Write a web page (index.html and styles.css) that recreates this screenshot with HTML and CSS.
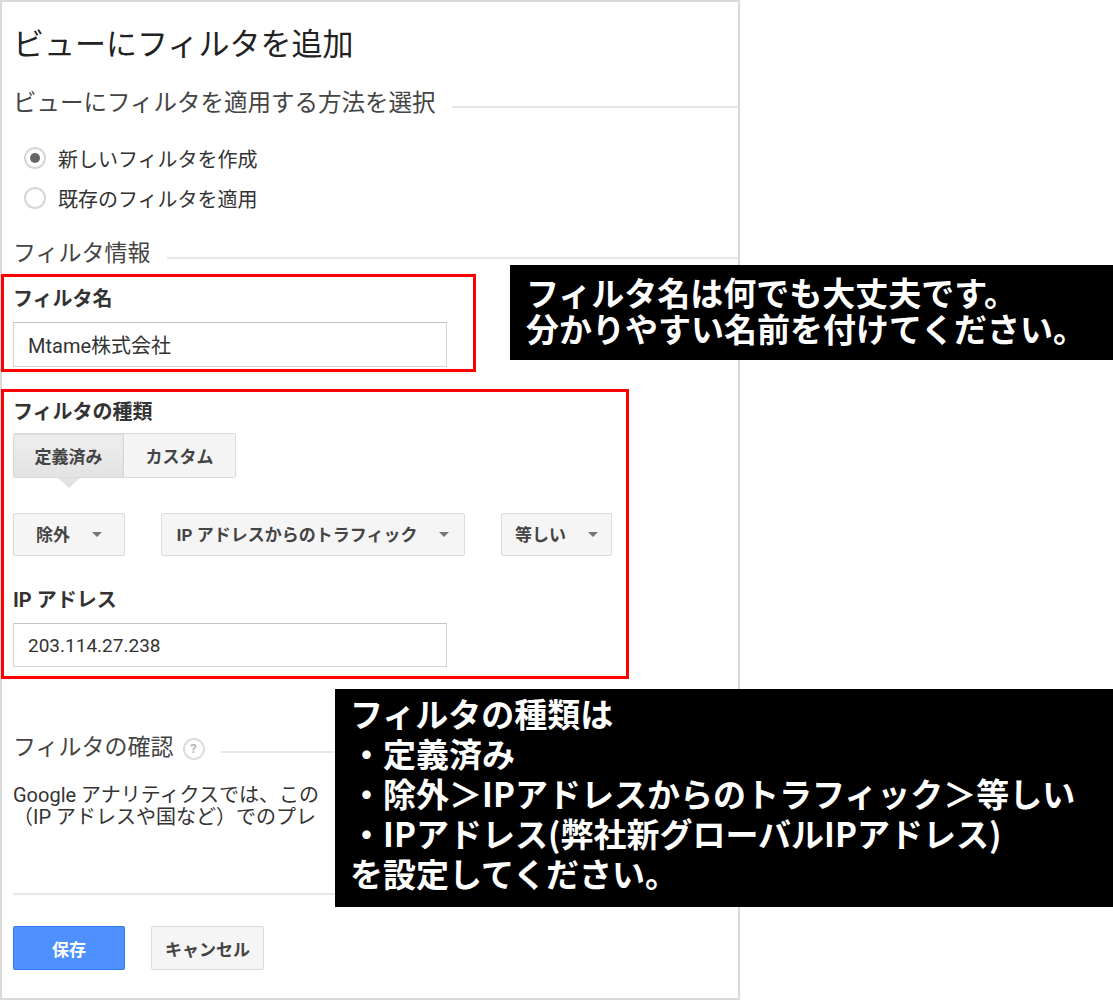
FILE: index.html
```html
<!DOCTYPE html>
<html lang="ja">
<head>
<meta charset="utf-8">
<title>ビューにフィルタを追加</title>
<link rel="stylesheet" href="styles.css">
</head>
<body>
<div class="page">
  <div class="panel">
    <h1 class="title">ビューにフィルタを追加</h1>

    <div class="sec-head sec-method"><span>ビューにフィルタを適用する方法を選択</span><i class="rule"></i></div>
    <div class="radios">
      <div class="radio"><span class="dot dot-on"></span>新しいフィルタを作成</div>
      <div class="radio"><span class="dot"></span>既存のフィルタを適用</div>
    </div>

    <div class="sec-head sec-info"><span>フィルタ情報</span><i class="rule"></i></div>
    <div class="field-label label-name">フィルタ名</div>
    <div class="input input-name">Mtame株式会社</div>

    <div class="field-label label-type">フィルタの種類</div>
    <div class="seg">
      <span class="seg-btn seg-sel">定義済み</span>
      <span class="seg-btn">カスタム</span>
    </div>

    <div class="drops">
      <div class="drop"><span>除外</span><i class="caret"></i></div>
      <div class="drop"><span>IP アドレスからのトラフィック</span><i class="caret"></i></div>
      <div class="drop"><span>等しい</span><i class="caret"></i></div>
    </div>

    <div class="field-label label-ip">IP アドレス</div>
    <div class="input input-ip">203.114.27.238</div>

    <div class="sec-head sec-verify"><span>フィルタの確認</span><span class="help">?</span><i class="rule"></i></div>
    <p class="verify-text">Google アナリティクスでは、この<br>（IP アドレスや国など）でのプレ</p>

    <div class="divider"></div>

    <div class="actions">
      <span class="btn btn-save">保存</span>
      <span class="btn btn-cancel">キャンセル</span>
    </div>
  </div>

  <div class="mark mark-name"></div>
  <div class="mark mark-type"></div>

  <div class="note note-name">フィルタ名は何でも大丈夫です。<br>分かりやすい名前を付けてください。</div>
  <div class="note note-type">フィルタの種類は<br>・定義済み<br>・除外＞IPアドレスからのトラフィック＞等しい<br>・IPアドレス(弊社新グローバルIPアドレス)<br>を設定してください。</div>
</div>
</body>
</html>
```

FILE: styles.css
```css
* { box-sizing: border-box; }

html, body {
  margin: 0;
  padding: 0;
  background: #ffffff;
}

body {
  font-family: Roboto, "Noto Sans CJK JP", sans-serif;
  color: #333333;
}

.page {
  position: relative;
  width: 1113px;
  height: 1001px;
  overflow: hidden;
}

.panel {
  width: 740px;
  height: 1000px;
  border: 2px solid #d9d9d9;
  padding: 23px 0 0 11px;
  display: flex;
  flex-direction: column;
  align-items: flex-start;
}

.title {
  margin: 0;
  font-size: 31px;
  line-height: 40px;
  font-weight: 400;
  color: #222222;
}

.sec-head {
  align-self: stretch;
  display: flex;
  align-items: center;
  height: 30px;
  font-size: 23px;
  line-height: 30px;
  color: #444444;
}

.sec-method { font-size: 23.5px; }

.sec-head .rule {
  flex: 1;
  height: 2px;
  margin-top: 8px;
  margin-left: 16px;
  background: #e6e6e6;
}

.sec-method { margin-top: 23px; }
.sec-info { margin-top: 21px; }
.sec-verify { margin-top: 66px; }

.help {
  width: 22px;
  height: 22px;
  margin-left: 9px;
  margin-top: 2px;
  border: 2px solid #dddddd;
  border-radius: 50%;
  font-size: 13px;
  line-height: 18px;
  text-align: center;
  color: #b5b5b5;
  font-weight: 700;
}

.radios {
  margin-top: 20px;
  display: flex;
  flex-direction: column;
}

.radio {
  display: flex;
  align-items: center;
  height: 40px;
  font-size: 20px;
  color: #333333;
}

.dot {
  width: 22px;
  height: 22px;
  margin: 0 12px 0 11px;
  border: 2px solid #d6d6d6;
  border-radius: 50%;
  display: flex;
  align-items: center;
  justify-content: center;
}

.dot-on::before {
  content: "";
  width: 10px;
  height: 10px;
  border-radius: 50%;
  background: #666666;
}

.field-label {
  font-size: 20px;
  line-height: 28px;
  font-weight: 700;
  color: #333333;
}

.label-name { margin-top: 16px; }
.label-type { margin-top: 31px; }
.label-ip { margin-top: 30px; }

.input {
  width: 434px;
  margin-top: 9px;
  border: 1px solid #d4d4d4;
  border-top-color: #c4c4c4;
  padding-left: 14px;
  display: flex;
  align-items: center;
  font-size: 20px;
  color: #333333;
}

.input-name { height: 45px; }
.input-ip { height: 44px; font-size: 19px; }

.seg {
  margin-top: 7px;
  display: flex;
  height: 45px;
  border: 1px solid #dadada;
  border-radius: 2px;
}

.seg-btn {
  position: relative;
  display: flex;
  align-items: center;
  justify-content: center;
  width: 111px;
  font-size: 17px;
  font-weight: 700;
  color: #444444;
  background: #f4f4f4;
}

.seg-sel {
  width: 110px;
  background: linear-gradient(#eeeeee, #e3e3e3);
  border-right: 1px solid #d6d6d6;
  box-shadow: inset 0 1px 2px rgba(0, 0, 0, 0.08);
}

.seg-sel::after {
  content: "";
  position: absolute;
  left: 50%;
  bottom: -11px;
  margin-left: -11px;
  border-top: 10px solid #e2e2e2;
  border-left: 11px solid transparent;
  border-right: 11px solid transparent;
}

.drops {
  margin-top: 35px;
  display: flex;
  gap: 36px;
}

.drop {
  height: 43px;
  min-width: 112px;
  padding: 0 13px;
  display: flex;
  align-items: center;
  justify-content: center;
  gap: 22px;
  background: #f5f5f5;
  border: 1px solid #dcdcdc;
  border-radius: 2px;
  font-size: 17px;
  font-weight: 700;
  color: #444444;
}

.drop span { margin-top: -3px; }

.drop:nth-child(2) { width: 304px; }
.drop:nth-child(3) { width: 111px; min-width: 111px; }

.caret {
  width: 0;
  height: 0;
  border-top: 5px solid #777777;
  border-left: 5.5px solid transparent;
  border-right: 5.5px solid transparent;
}

.verify-text {
  margin: 21px 0 0 0;
  font-size: 20px;
  line-height: 22px;
  color: #333333;
  white-space: nowrap;
}

.divider {
  margin-top: 65px;
  width: 712px;
  height: 2px;
  background: #e6e6e6;
}

.actions {
  margin-top: 31px;
  display: flex;
  gap: 26px;
}

.btn {
  height: 44px;
  display: flex;
  align-items: center;
  justify-content: center;
  border-radius: 2px;
  font-size: 17px;
  font-weight: 700;
}

.btn-save {
  width: 112px;
  background: #4d90fe;
  border: 1px solid #3079ed;
  color: #ffffff;
}

.btn-cancel {
  width: 113px;
  background: #f5f5f5;
  border: 1px solid #dcdcdc;
  color: #444444;
}

.mark {
  position: absolute;
  border: 3px solid #ff0000;
}

.mark-name {
  left: 1px;
  top: 274px;
  width: 475px;
  height: 98px;
}

.mark-type {
  left: 1px;
  top: 389px;
  width: 628px;
  height: 290px;
}

.note {
  position: absolute;
  background: #000000;
  color: #ffffff;
  font-family: "Noto Sans CJK JP", sans-serif;
  font-weight: 700;
  white-space: nowrap;
}

.note-name {
  left: 510px;
  top: 265px;
  width: 603px;
  height: 95px;
  padding: 9px 0 0 16px;
  font-size: 33px;
  line-height: 36px;
}

.note-type {
  left: 335px;
  top: 689px;
  width: 778px;
  height: 218px;
  padding: 4px 0 0 15px;
  font-size: 33px;
  line-height: 40px;
}
```
